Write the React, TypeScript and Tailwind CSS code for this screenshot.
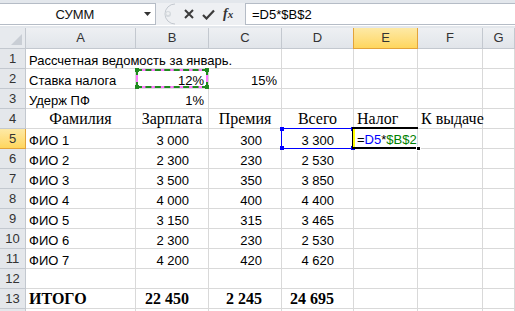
import React from "react";

type Cell = {
  t?: React.ReactNode;
  a?: "l" | "r" | "c";
  f?: "sans" | "serif" | "serifb";
  pr?: string;
  noR?: boolean;
};

const cols = ["A", "B", "C", "D", "E", "F", "G"];

const num = (t: string, f: Cell["f"] = "sans"): Cell => ({ t, a: "r", f, pr: "pr-[19px]" });

const rows: Cell[][] = [
  [{ t: "Рассчетная ведомость за январь.", noR: true }, { noR: true }, {}, {}, {}, {}, {}],
  [
    { t: "Ставка налога" },
    { t: "12%", a: "r", pr: "pr-[4px]" },
    { t: "15%", a: "r", pr: "pr-[4px]" },
    {},
    {},
    {},
    {},
  ],
  [{ t: "Удерж ПФ" }, { t: "1%", a: "r", pr: "pr-[4px]" }, {}, {}, {}, {}, {}],
  [
    { t: "Фамилия", a: "c", f: "serif" },
    { t: "Зарплата", a: "c", f: "serif" },
    { t: "Премия", a: "c", f: "serif" },
    { t: "Всего", a: "c", f: "serif" },
    { t: "Налог", f: "serif" },
    { t: "К выдаче", f: "serif" },
    {},
  ],
  [{ t: "ФИО 1" }, num("3 000"), num("300"), num("3 300"), {}, {}, {}],
  [{ t: "ФИО 2" }, num("2 300"), num("230"), num("2 530"), {}, {}, {}],
  [{ t: "ФИО 3" }, num("3 500"), num("350"), num("3 850"), {}, {}, {}],
  [{ t: "ФИО 4" }, num("4 000"), num("400"), num("4 400"), {}, {}, {}],
  [{ t: "ФИО 5" }, num("3 150"), num("315"), num("3 465"), {}, {}, {}],
  [{ t: "ФИО 6" }, num("2 300"), num("230"), num("2 530"), {}, {}, {}],
  [{ t: "ФИО 7" }, num("4 200"), num("420"), num("4 620"), {}, {}, {}],
  [{}, {}, {}, {}, {}, {}, {}],
  [
    { t: "ИТОГО", f: "serifb" },
    num("22 450", "serifb"),
    num("2 245", "serifb"),
    num("24 695", "serifb"),
    {},
    {},
    {},
  ],
  [{}, {}, {}, {}, {}, {}, {}],
];

function Ants() {
  return (
    <div className="absolute inset-0 pointer-events-none z-10">
      <div className="absolute inset-0 border-2 border-[#ff77ff]" />
      <div className="absolute inset-0 border-2 border-dashed border-[#1f8a1f]" />
      <div className="absolute left-[-1px] top-[-1px] w-[4px] h-[4px] bg-[#1f8a1f]" />
      <div className="absolute right-[-1px] top-[-1px] w-[4px] h-[4px] bg-[#1f8a1f]" />
      <div className="absolute left-[-1px] bottom-[-1px] w-[4px] h-[4px] bg-[#1f8a1f]" />
      <div className="absolute right-[-1px] bottom-[-1px] w-[4px] h-[4px] bg-[#1f8a1f]" />
    </div>
  );
}

function BlueRange() {
  return (
    <div className="absolute left-[-1px] top-[-1px] right-[-1px] bottom-[-1px] border border-[#0000ff] pointer-events-none z-10">
      <div className="absolute left-[-2px] top-[-2px] w-[4px] h-[4px] bg-[#0000ff]" />
      <div className="absolute right-[-2px] top-[-2px] w-[4px] h-[4px] bg-[#0000ff]" />
      <div className="absolute left-[-2px] bottom-[-2px] w-[4px] h-[4px] bg-[#0000ff]" />
      <div className="absolute right-[-2px] bottom-[-2px] w-[4px] h-[4px] bg-[#0000ff]" />
    </div>
  );
}

function ActiveEdit() {
  return (
    <div className="absolute left-[-2px] top-[-2px] right-[-1px] bottom-[-1px] pointer-events-none z-20">
      <div className="absolute left-0 top-0 right-0 h-[2px] bg-black" />
      <div className="absolute left-0 bottom-0 right-0 h-[2px] bg-black" />
      <div className="absolute left-0 top-0 bottom-0 w-[1px] bg-black" />
      <div className="absolute left-[1px] top-[2px] bottom-[2px] w-[2px] bg-[#ffff00]" />
      <div className="absolute right-[-3px] bottom-[-2px] w-[5px] h-[5px] bg-black border border-white" />
    </div>
  );
}

export default function App() {
  const fontFor = (f?: Cell["f"]) =>
    f === "serif"
      ? "font-['Liberation_Serif',serif] text-[16px] leading-[18px]"
      : f === "serifb"
      ? "font-['Liberation_Serif',serif] text-[16px] leading-[18px] font-bold"
      : "font-['Liberation_Sans',Arial,sans-serif] text-[13px] leading-[15px]";

  return (
    <div className="w-[515px] h-[311px] overflow-hidden bg-white font-['Liberation_Sans',Arial,sans-serif] text-black">
      {/* formula bar */}
      <div className="h-[28px] bg-[#e3e7ec] flex flex-col">
        <div className="flex items-start pt-[3px] h-[25px]">
          <div className="w-[156px] h-[22px] bg-white border border-[#b5bcc6] border-l-0 flex items-center pr-[4px]">
            <span className="flex-1 text-center pl-[6px] text-[13px] leading-[15px] text-[#111]">СУММ</span>
            <svg width="7" height="4" viewBox="0 0 7 4">
              <path d="M0 0H7L3.5 4Z" fill="#333" />
            </svg>
          </div>
          <div className="w-[89px] h-[22px] flex items-center gap-[8px] pl-[2px] bg-[#eef0f3]">
            <svg width="18" height="22" viewBox="0 0 18 22">
              <path d="M17 1 A10 10 0 0 0 17 21" fill="none" stroke="#c3c8cf" strokeWidth="1" />
              <circle cx="10" cy="11" r="3" fill="#d5d9de" />
              <circle cx="10" cy="10.5" r="1.6" fill="#eef0f2" />
            </svg>
            <svg width="10" height="10" viewBox="0 0 10 10">
              <path d="M1 1L9 9M9 1L1 9" stroke="#3c3c3c" strokeWidth="2" />
            </svg>
            <svg width="13" height="11" viewBox="0 0 13 11">
              <path d="M1 6L4.5 9.5L12 1.5" fill="none" stroke="#3c3c3c" strokeWidth="2.2" />
            </svg>
            <span className="font-['Liberation_Serif',serif] italic font-bold text-[14px] leading-[16px] text-[#333]">
              f<span className="text-[11px]">x</span>
            </span>
          </div>
          <div className="flex-1 h-[22px] bg-white border border-[#b5bcc6] border-r-0 flex items-center pl-[6px] text-[13px] leading-[15px]">
            =D5*$B$2
          </div>
        </div>
        <div className="h-[3px] border-t border-white bg-[#e3e7ec]" />
      </div>

      {/* grid */}
      <div className="grid grid-cols-[26px_110px_73px_73px_72px_64px_65px_1fr]">
        {/* header row */}
        <div className="h-[21px] bg-[#e7eaee] border-r border-b border-[#c3c8cf] flex items-end justify-end p-[3px]">
          <svg width="11" height="11" viewBox="0 0 11 11">
            <path d="M11 0V11H0Z" fill="#c9ced5" />
          </svg>
        </div>
        {cols.map((c) =>
          c === "E" ? (
            <div
              key={c}
              className="h-[21px] bg-gradient-to-b from-[#fde9a5] to-[#ffd65c] border-r border-b border-[#e3a33a] border-l border-l-[#e3a33a] -ml-[1px] flex items-center justify-center text-[13px] text-[#333]"
            >
              {c}
            </div>
          ) : (
            <div
              key={c}
              className="h-[21px] bg-gradient-to-b from-[#eef0f3] to-[#e1e5ea] border-r border-b border-[#c3c8cf] flex items-center justify-center text-[13px] text-[#333]"
            >
              {c}
            </div>
          )
        )}

        {rows.map((row, ri) => (
          <React.Fragment key={ri}>
            <div
              className={
                ri === 4
                  ? "h-[20px] bg-gradient-to-b from-[#fde9a5] to-[#ffd65c] border-r border-b border-[#e3a33a] flex items-center justify-center text-[13px] text-[#333]"
                  : "h-[20px] bg-[#e4e7eb] border-r border-b border-[#c3c8cf] flex items-center justify-center text-[13px] text-[#333]"
              }
            >
              {ri < 13 ? ri + 1 : ""}
            </div>
            {row.map((cell, ci) => {
              const align =
                cell.a === "r" ? "justify-end" : cell.a === "c" ? "justify-center" : "justify-start pl-[3px]";
              return (
                <div
                  key={ci}
                  className={`h-[20px] relative flex items-end whitespace-nowrap border-b border-[#d9d9d9] ${
                    cell.noR ? "" : "border-r"
                  } ${align} ${cell.pr ?? ""} ${fontFor(cell.f)}`}
                >
                  {ri === 4 && ci === 4 ? (
                    <span className="relative z-30 pl-[0px] pb-[1px]">
                      =<span className="text-[#0000ff]">D5</span>*<span className="text-[#008000]">$B$2</span>
                    </span>
                  ) : (
                    cell.t
                  )}
                  {ri === 1 && ci === 1 && <Ants />}
                  {ri === 4 && ci === 3 && <BlueRange />}
                  {ri === 3 && ci === 4 && (
                    <div className="absolute left-[-1px] right-[-1px] bottom-[-1px] h-[2px] bg-black" />
                  )}
                  {ri === 4 && ci === 4 && <ActiveEdit />}
                </div>
              );
            })}
          </React.Fragment>
        ))}
      </div>
    </div>
  );
}
